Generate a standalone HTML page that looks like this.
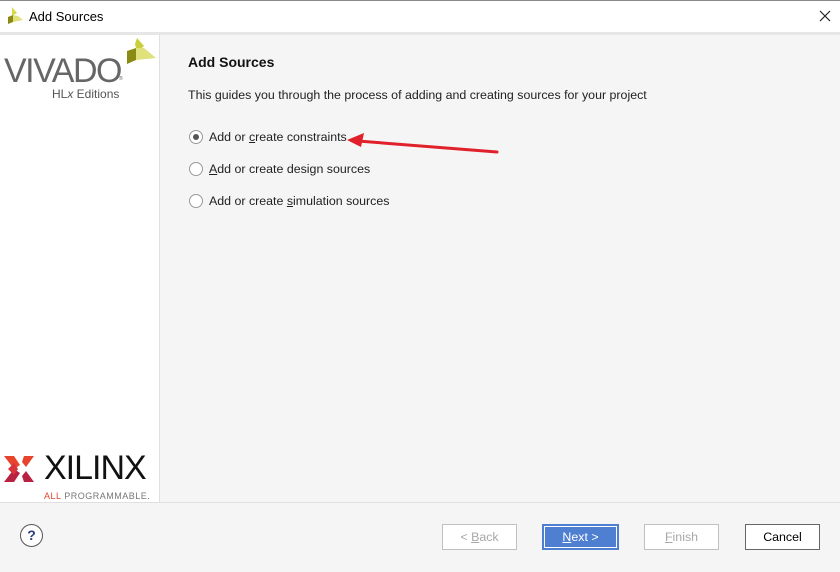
<!DOCTYPE html>
<html><head><style>
body{margin:0;width:840px;height:572px;background:#f5f5f5;font-family:"Liberation Sans",Arial,sans-serif;position:relative;overflow:hidden}
.a{position:absolute}
.t{font-size:12.4px;color:#222}
.rad{position:absolute;width:12px;height:12px;border:1px solid #9a9a9a;border-radius:50%;background:#fff}
.btn{position:absolute;top:524px;height:26px;box-sizing:border-box;border:1px solid #c0c0c0;background:#fff;font-size:12.4px;text-align:center;line-height:24px;color:#a8a8a8}
</style></head><body>
<div class="a" style="left:0;top:0;width:840px;height:1px;background:#888"></div>
<div class="a" style="left:0;top:1px;width:840px;height:31px;background:#fff"></div>
<svg class="a" style="left:6px;top:7px" width="18" height="18" viewBox="0 0 18 18"><polygon points="6,0 11,6 6,9" fill="#d6da4a"/><polygon points="2,10 7,8 7,15 2,17" fill="#8b8a14"/><polygon points="7,8 12,9 17,13 7,15" fill="#dfe27a"/></svg>
<div class="a" style="left:29px;top:9px;font-size:13px;color:#000;font-family:'Liberation Sans','Noto Sans CJK SC',sans-serif">Add Sources</div>
<svg class="a" style="left:819px;top:10px" width="12" height="12"><path d="M1 1L11 11M11 1L1 11" stroke="#222" stroke-width="1.2"/></svg>
<div class="a" style="left:0;top:32px;width:840px;height:3px;background:#e6e6e6"></div>
<div class="a" style="left:0;top:35px;width:159px;height:467px;background:#fff;border-right:1px solid #e0e0e0"></div>
<div class="a" style="left:4px;top:52px;font-size:34px;color:#666;letter-spacing:-1.5px">VIVADO</div>
<div class="a" style="left:119px;top:76px;font-size:5px;color:#666">®</div>
<svg class="a" style="left:124px;top:38px" width="34" height="32" viewBox="0 0 34 32"><polygon points="13,0 20,8 13,14 11,6" fill="#c9cf3a"/><polygon points="3,13 12,10 12,22 3,26" fill="#8b8a14"/><polygon points="12,10 20,10 32,20 12,22" fill="#dfe27a"/></svg>
<div class="a" style="left:52px;top:87px;font-size:12px;color:#555">HL<i>x</i> Editions</div>
<svg class="a" style="left:4px;top:453px" width="30" height="32" viewBox="0 0 30 32"><polygon points="0,3 10,3 16,12 10,16" fill="#e8432c"/><polygon points="0,29 10,29 16,20 10,16" fill="#b82240"/><polygon points="20,3 30,3 22,14 18,9" fill="#e8432c"/><polygon points="20,29 30,29 22,18 18,23" fill="#b82240"/><polygon points="4,16 10,10 14,16 10,22" fill="#d6333a"/></svg>
<div class="a" style="left:44px;top:449px;font-size:34px;color:#111;letter-spacing:-1px">XILINX</div>
<div class="a" style="left:44px;top:491px;font-size:9px;color:#777;letter-spacing:0.5px"><span style="color:#e8432c">ALL</span> PROGRAMMABLE.</div>
<div class="a" style="left:0;top:502px;width:840px;height:1px;background:#e0e0e0"></div>
<div class="a" style="left:188px;top:54px;font-size:14px;font-weight:bold;color:#111">Add Sources</div>
<div class="a t" style="left:188px;top:88px">This guides you through the process of adding and creating sources for your project</div>
<div class="rad" style="left:189px;top:130px"><div style="position:absolute;left:3px;top:3px;width:6px;height:6px;border-radius:50%;background:#555"></div></div>
<div class="a t" style="left:209px;top:130px">Add or <u>c</u>reate constraints</div>
<div class="rad" style="left:189px;top:162px"></div>
<div class="a t" style="left:209px;top:162px"><u>A</u>dd or create design sources</div>
<div class="rad" style="left:189px;top:194px"></div>
<div class="a t" style="left:209px;top:194px">Add or create <u>s</u>imulation sources</div>
<svg class="a" style="left:340px;top:130px" width="165" height="28"><path d="M157 22L18 11" stroke="#e0202a" stroke-width="3" stroke-linecap="round"/><polygon points="7,10 24,3 21,17" fill="#e0202a"/></svg>
<div class="a" style="left:20px;top:524px;width:23px;height:23px;box-sizing:border-box;border:1px solid #555;border-radius:50%;background:#fff;text-align:center;line-height:21px;font-size:14px;font-weight:bold;color:#2a3f7a">?</div>
<div class="btn" style="left:442px;width:75px">&lt; <u>B</u>ack</div>
<div class="btn" style="left:542px;width:77px;background:#4f7fd0;border:2px solid #4f7fd0;box-shadow:inset 0 0 0 1px #fff;color:#fff;line-height:22px"><u>N</u>ext &gt;</div>
<div class="btn" style="left:644px;width:75px"><u>F</u>inish</div>
<div class="btn" style="left:745px;width:75px;border-color:#666;color:#000">Cancel</div>
</body></html>
